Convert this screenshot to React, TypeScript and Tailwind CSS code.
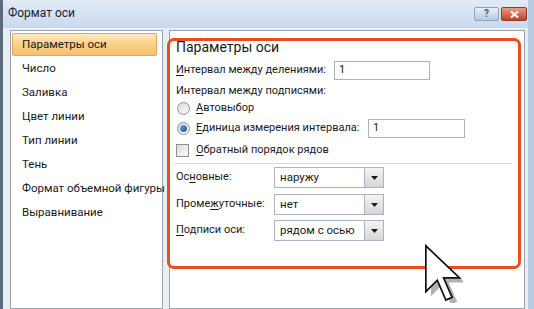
import React from 'react';

const font = { fontFamily: 'Roboto, "Noto Sans", sans-serif' };

const Acc: React.FC<{ children: React.ReactNode }> = ({ children }) => (
  <span className="underline underline-offset-2 decoration-1">{children}</span>
);

const Radio: React.FC<{ checked?: boolean }> = ({ checked }) => (
  <span className="w-[13px] h-[13px] rounded-full border border-[#8f8f8f] bg-gradient-to-br from-[#dcdcdc] to-[#fafafa] flex items-center justify-center shrink-0">
    {checked && <span className="w-[7px] h-[7px] rounded-full bg-gradient-to-br from-[#6fa6e0] to-[#1b4f9c]" />}
  </span>
);

const Dropdown: React.FC<{ value: string }> = ({ value }) => (
  <div className="w-[110px] h-[21px] border border-[#a9b3bf] bg-white flex shrink-0">
    <div className="flex-1 pl-[5px] flex items-center text-[11.5px] text-[#1a1a1a]">{value}</div>
    <div className="w-[19px] h-full border-l border-[#a9b3bf] bg-gradient-to-b from-[#f4f4f4] to-[#d6d6d6] flex items-center justify-center">
      <svg width="7" height="4" viewBox="0 0 7 4"><path d="M0 0h7L3.5 4z" fill="#1a1a1a" /></svg>
    </div>
  </div>
);

const menu = ['Число', 'Заливка', 'Цвет линии', 'Тип линии', 'Тень', 'Формат объемной фигуры', 'Выравнивание'];

const App: React.FC = () => {
  return (
    <div style={font} className="w-[534px] h-[309px] overflow-hidden relative bg-[#e9eef5] border-l-[3px] border-r-[6px] border-l-[#5b6a7c] border-r-[#b9cbe1] flex flex-col whitespace-nowrap">
      {/* title bar */}
      <div className="h-[28px] shrink-0 bg-gradient-to-b from-[#e2ebf6] to-[#c9d9ec] flex items-center pl-[5px] pr-[1px]">
        <span className="text-[12px] text-[#1b2535] -mt-[2px]">Формат оси</span>
        <div className="ml-auto flex gap-[2px] self-start mt-[7px]">
          <div className="w-[25px] h-[14px] rounded-[2px] border border-[#8da2bd] bg-gradient-to-b from-[#e8f0f9] to-[#b7c9df] flex items-center justify-center text-[10px] font-bold text-[#4a5c73] leading-none">?</div>
          <div className="w-[26px] h-[14px] rounded-[2px] border border-[#8e3a2c] bg-gradient-to-b from-[#e99a86] to-[#c2412a] flex items-center justify-center">
            <svg width="9" height="7" viewBox="0 0 9 7"><path d="M1 0.5L8 6.5M8 0.5L1 6.5" stroke="#fff" strokeWidth="2" /></svg>
          </div>
        </div>
      </div>

      <div className="flex flex-1 pt-[2px]">
        {/* left list */}
        <div className="ml-[7px] w-[153px] bg-white border border-[#9aa3ad] pt-[2px] px-[1px]">
          <div className="h-[23px] mr-[4px] mb-[1px] rounded-[2px] border border-[#e0a55f] bg-gradient-to-b from-[#fde9c4] via-[#fbcf86] to-[#f8c071] flex items-center pl-[9px] text-[11.5px] text-[#1a1a1a]">
            Параметры оси
          </div>
          {menu.map(m => (
            <div key={m} className="h-[24px] flex items-center pl-[10px] text-[11.5px] text-[#1a1a1a]">{m}</div>
          ))}
        </div>

        {/* right pane */}
        <div className="ml-[6px] flex-1 mr-[3px] bg-white border border-[#9aa3ad] pt-[7px]">
          <div className="-ml-[3px] w-[354px] h-[231px] rounded-[7px] border-[3px] border-[#ea4c1d] pl-[6px] text-[11px] text-[#1a1a1a]">
            <div className="h-[14px] leading-[14px] text-[14px] text-[#1a1a1a] -mt-[1px]">Параметры оси</div>

            <div className="mt-[7px] h-[19px] flex items-center">
              <span className="w-[158px] shrink-0"><Acc>И</Acc>нтервал между делениями:</span>
              <div className="w-[96px] h-[19px] border border-[#a9b3bf] flex items-center pl-[4px]">1</div>
            </div>

            <div className="mt-[2px] h-[18px] flex items-center">Интервал между подписями:</div>

            <div className="h-[16px] flex items-center gap-[6px] pl-[1px]">
              <Radio />
              <span><Acc>А</Acc>втовыбор</span>
            </div>

            <div className="mt-[3px] h-[19px] flex items-center pl-[1px]">
              <Radio checked />
              <span className="ml-[6px] w-[172px] shrink-0"><Acc>Е</Acc>диница измерения интервала:</span>
              <div className="w-[97px] h-[19px] border border-[#a9b3bf] flex items-center pl-[4px]">1</div>
            </div>

            <div className="mt-[4px] h-[16px] flex items-center gap-[7px]">
              <span className="w-[13px] h-[13px] border border-[#8f8f8f] bg-gradient-to-br from-[#dcdcdc] to-[#fbfbfb]" />
              <span><Acc>О</Acc>братный порядок рядов</span>
            </div>

            <div className="mt-[5px] -ml-[2px] mr-[6px] h-px bg-[#d5d9de]" />

            <div className="mt-[3px] h-[21px] flex items-center">
              <span className="w-[98px] shrink-0">Ос<Acc>н</Acc>овные:</span>
              <Dropdown value="наружу" />
            </div>
            <div className="mt-[6px] h-[21px] flex items-center">
              <span className="w-[98px] shrink-0">Проме<Acc>ж</Acc>уточные:</span>
              <Dropdown value="нет" />
            </div>
            <div className="mt-[5px] h-[21px] flex items-center">
              <span className="w-[98px] shrink-0"><Acc>П</Acc>одписи оси:</span>
              <Dropdown value="рядом с осью" />
            </div>
          </div>
        </div>
      </div>

      {/* mouse cursor */}
      <svg className="absolute left-[420px] top-[243px]" width="40" height="60" viewBox="0 0 14 21">
        <path d="M1.6 1.6v16l4-4 3 7 2.2-1-3-6.8h5.6z" fill="#000" opacity="0.3" transform="translate(1.2 1)" />
        <path d="M1 1v16l4-4 3 7 2.2-1-3-6.8h5.6z" fill="#fff" stroke="#111" strokeWidth="0.6" strokeLinejoin="miter" />
      </svg>
    </div>
  );
};

export default App;
